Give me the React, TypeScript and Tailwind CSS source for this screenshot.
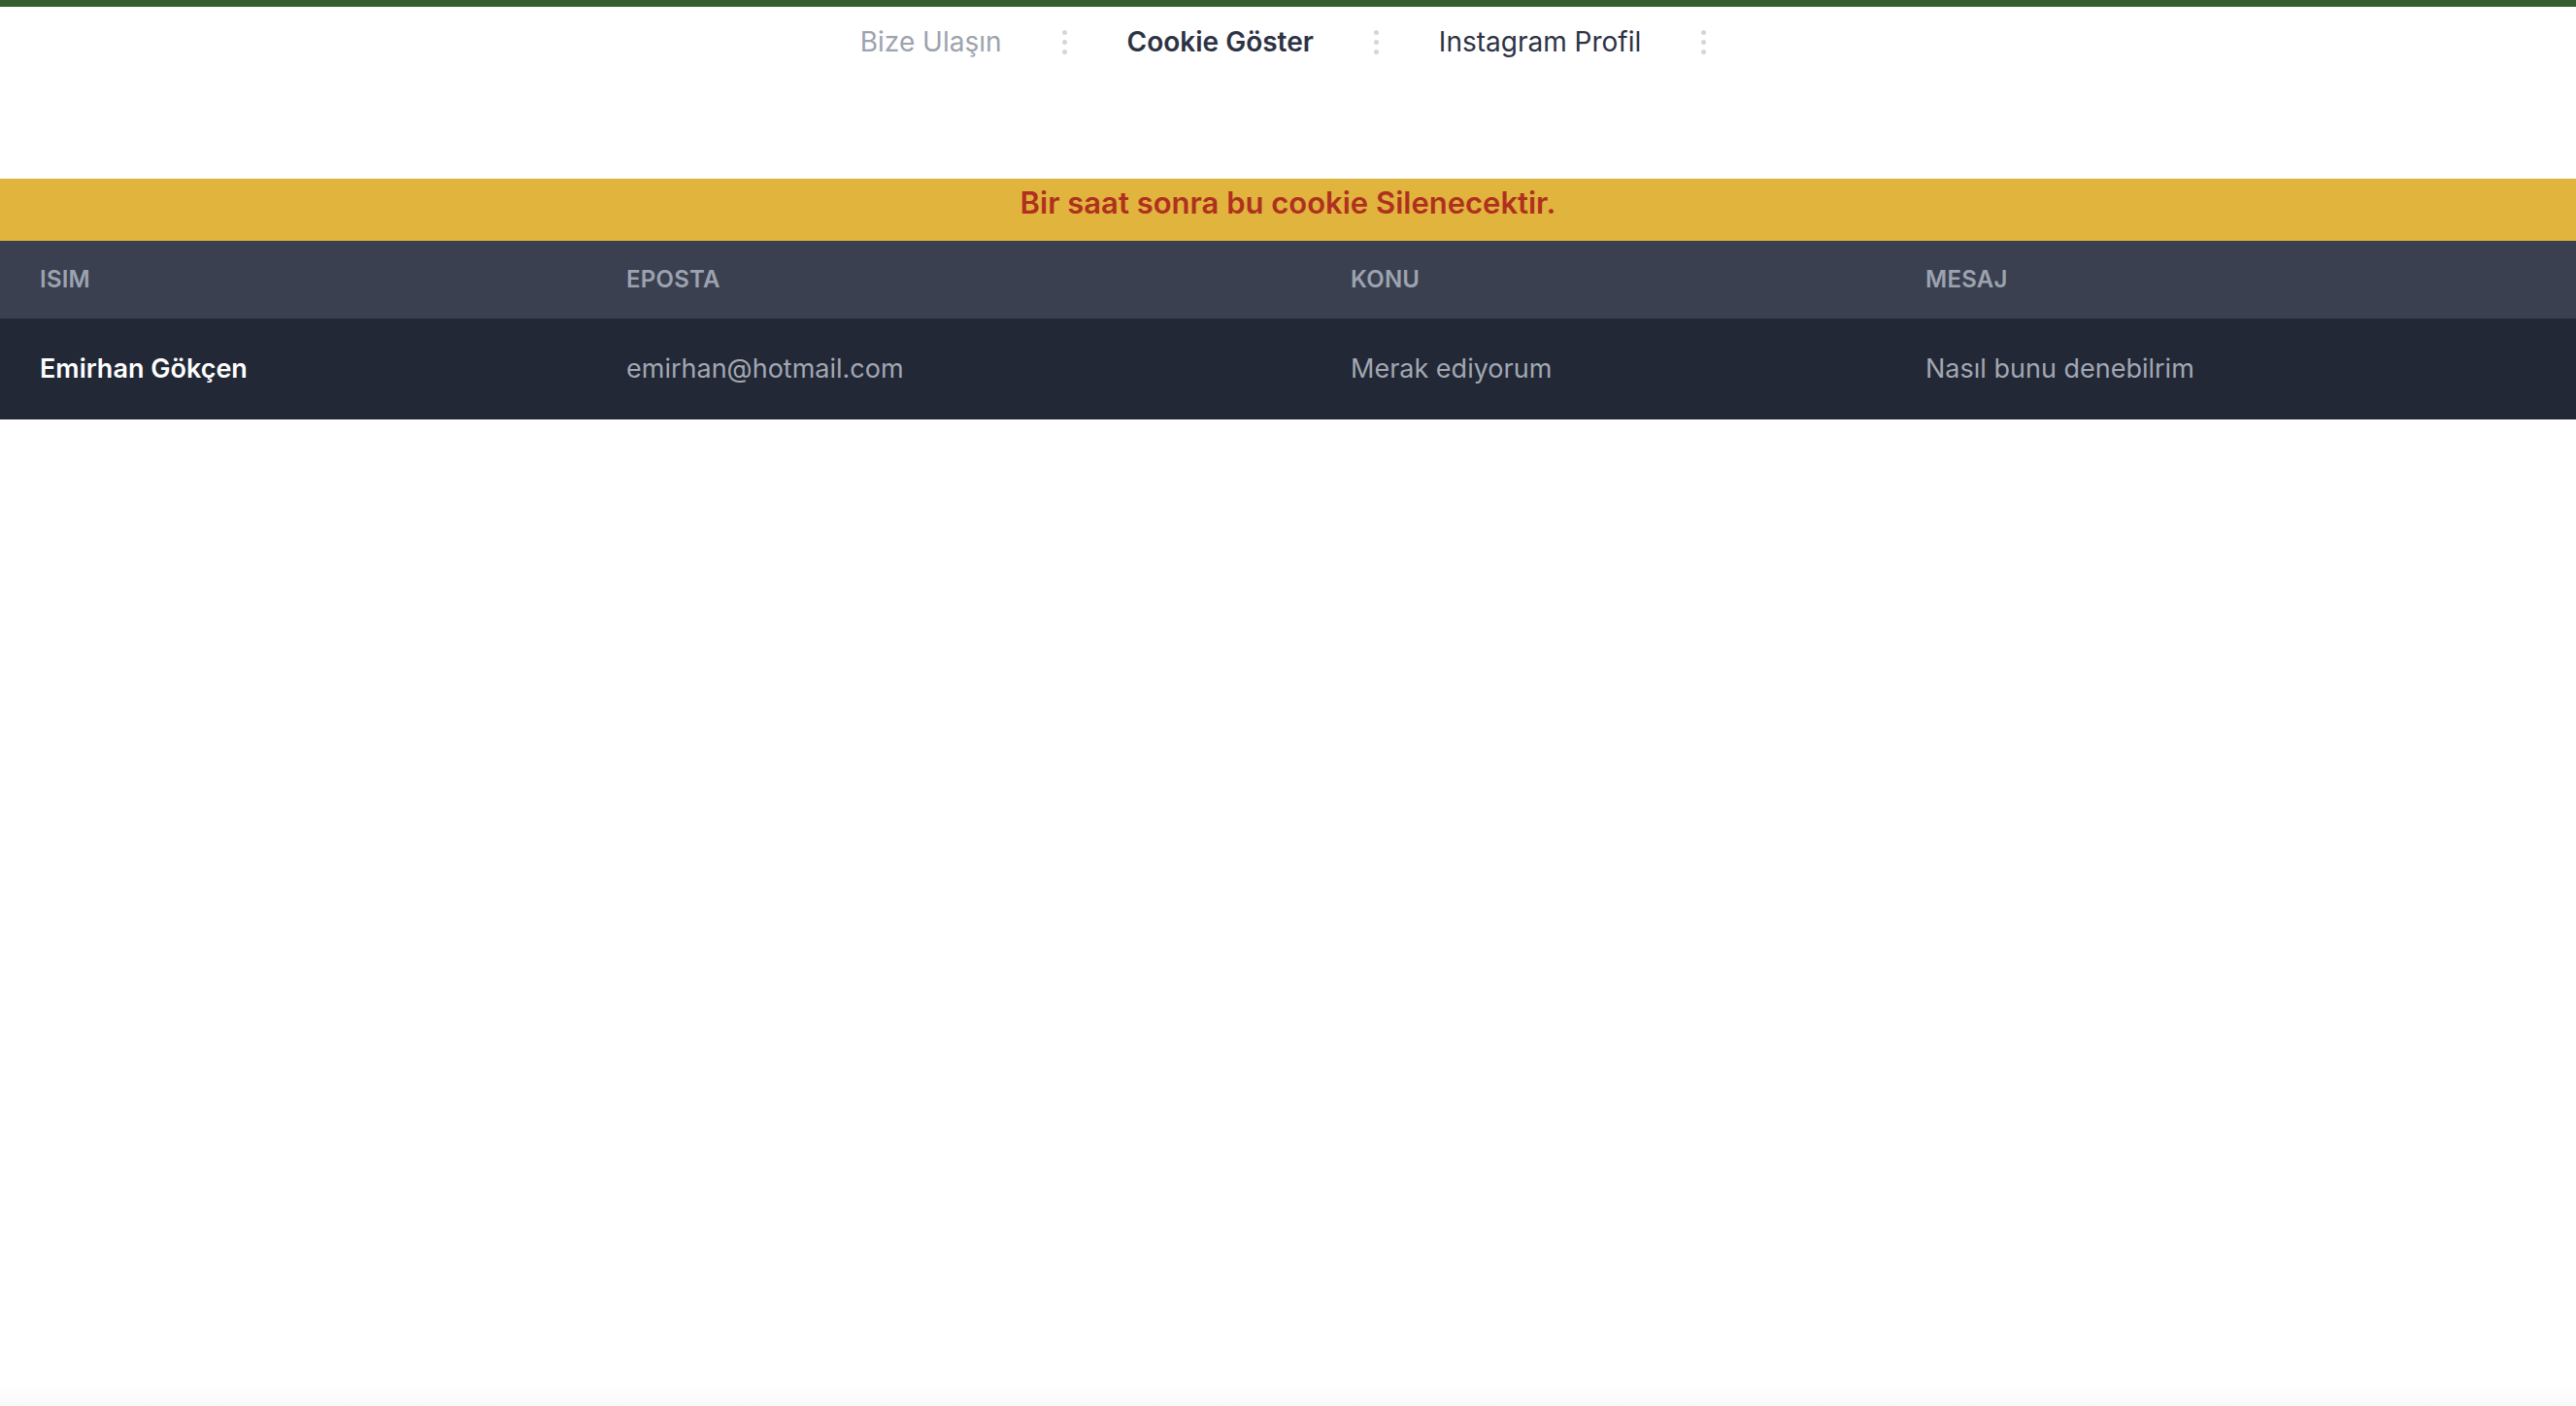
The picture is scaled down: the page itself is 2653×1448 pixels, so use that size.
import React from "react";

function Dots() {
  return (
    <div className="flex flex-col items-center gap-[5px]">
      <span className="block h-[5px] w-[5px] rounded-full bg-[#d4d6da]" />
      <span className="block h-[5px] w-[5px] rounded-full bg-[#d4d6da]" />
      <span className="block h-[5px] w-[5px] rounded-full bg-[#d4d6da]" />
    </div>
  );
}

export default function App() {
  const cols = "grid grid-cols-[604px_746px_592px_711px]";
  return (
    <div
      className="min-h-[1448px] w-full bg-white flex flex-col"
      style={{ fontFamily: "Inter, 'Noto Sans', sans-serif" }}
    >
      <div className="h-[7px] w-full bg-[#355d30]" />
      <nav className="flex h-[70px] items-center justify-center pt-[2px] pr-[10px]">
        <a className="text-[28px] text-[#9ca3af]">Bize Ulaşın</a>
        <div className="mx-[62px]">
          <Dots />
        </div>
        <a className="text-[28px] font-semibold text-[#2d3344]">Cookie Göster</a>
        <div className="mx-[62px]">
          <Dots />
        </div>
        <a className="text-[28px] text-[#2d3344]">Instagram Profil</a>
        <div className="ml-[62px]">
          <Dots />
        </div>
      </nav>
      <div className="h-[107px]" />
      <div className="flex h-[64px] items-center justify-center bg-[#e1b43e] pb-[14px]">
        <span className="text-[31px] font-semibold text-[#b0301f]">
          Bir saat sonra bu cookie Silenecektir.
        </span>
      </div>
      <div className={`${cols} h-[80px] items-center bg-[#3a4050]`}>
        {["ISIM", "EPOSTA", "KONU", "MESAJ"].map((h) => (
          <div
            key={h}
            className="px-[41px] text-[24px] font-semibold tracking-[0.01em] text-[#9ca3af]"
          >
            {h}
          </div>
        ))}
      </div>
      <div className={`${cols} h-[104px] items-center bg-[#222836]`}>
        <div className="px-[41px] text-[27px] font-semibold text-white">Emirhan Gökçen</div>
        <div className="px-[41px] text-[27px] text-[#a2a7b1]">emirhan@hotmail.com</div>
        <div className="px-[41px] text-[27px] text-[#a2a7b1]">Merak ediyorum</div>
        <div className="px-[41px] text-[27px] text-[#a2a7b1]">Nasıl bunu denebilrim</div>
      </div>
      <div className="flex-1" />
      <div className="h-[20px] w-full bg-gradient-to-b from-white to-[#f9f9f9]" />
    </div>
  );
}
